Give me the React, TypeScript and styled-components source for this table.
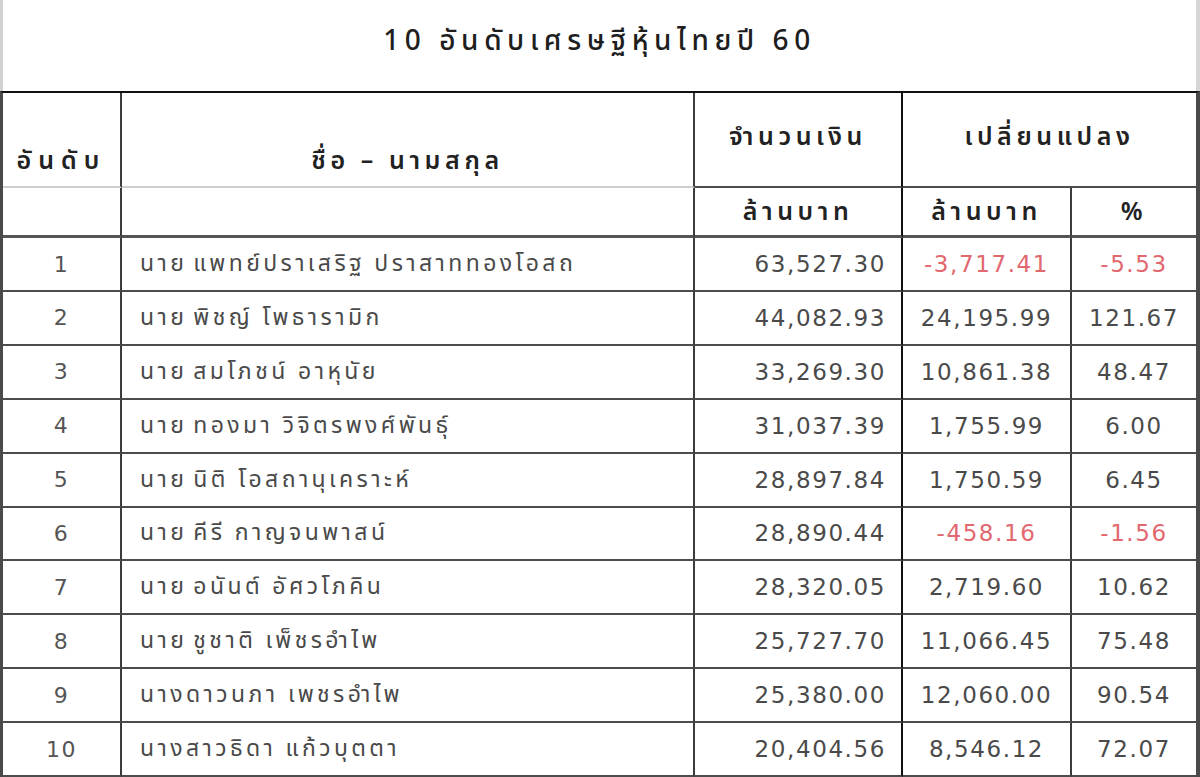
import React from "react";
import styled, { createGlobalStyle } from "styled-components";

const Global = createGlobalStyle`
  html, body { margin: 0; padding: 0; background: #ffffff; }
  body { width: 1200px; height: 777px; overflow: hidden; }
`;

const THAI = `"Noto Sans Thai", "Loma", "Garuda", "Tahoma", "DejaVu Sans", "Noto Sans", sans-serif`;
const NUM = `"DejaVu Sans", "Liberation Sans", sans-serif`;

const Page = styled.div`
  width: 1200px;
  height: 777px;
  display: flex;
  flex-direction: column;
  overflow: hidden;
  background: #fff;
`;

const TitleBar = styled.div`
  height: 93px;
  box-sizing: border-box;
  border-left: 3px solid #d2d2d2;
  border-right: 4px solid #d6d6d6;
  display: flex;
  align-items: center;
  justify-content: center;
  padding-bottom: 8px;
`;

const Title = styled.h1`
  margin: 0;
  font-family: ${THAI};
  font-size: 28px;
  font-weight: 500;
  color: #1e1e1e;
  letter-spacing: 5.6px;
`;

const Grid = styled.div`
  display: grid;
  grid-template-columns: 119px 573px 208px 169px 124px;
  grid-template-rows: 95px 50px repeat(10, 53.9px);
  border-top: 2px solid #111;
  border-left: 3px solid #4a4a4a;
  border-right: 4px solid #4a4a4a;
`;

const Cell = styled.div<{
  $align?: "left" | "center" | "right";
  $v?: "center" | "end";
  $span?: number;
  $noRight?: boolean;
  $bottom?: string;
  $rightColor?: string;
}>`
  box-sizing: border-box;
  display: flex;
  align-items: ${(p) => (p.$v === "end" ? "flex-end" : "center")};
  justify-content: ${(p) =>
    p.$align === "left" ? "flex-start" : p.$align === "right" ? "flex-end" : "center"};
  grid-column: span ${(p) => p.$span ?? 1};
  border-right: ${(p) => (p.$noRight ? "none" : `2px solid ${p.$rightColor ?? "#3c3c3c"}`)};
  border-bottom: ${(p) => p.$bottom ?? "2px solid #4d4d4d"};
  overflow: hidden;
  white-space: nowrap;
`;

const HeadText = styled.span<{ $pb?: number; $ls?: number }>`
  font-family: ${THAI};
  font-size: 25px;
  font-weight: 600;
  color: #222;
  letter-spacing: ${(p) => p.$ls ?? 4.6}px;
  padding-bottom: ${(p) => p.$pb ?? 0}px;
`;

const RankText = styled.span`
  font-family: ${NUM};
  font-size: 22px;
  color: #555;
  letter-spacing: 1.5px;
`;

const NameText = styled.span`
  font-family: ${THAI};
  font-size: 23px;
  color: #4a4a4a;
  letter-spacing: 3.4px;
  padding-left: 18px;
`;

const Prefix = styled.span`
  margin-right: 6px;
`;

const NumText = styled.span<{ $neg?: boolean; $pr?: number }>`
  font-family: ${NUM};
  font-size: 23px;
  color: ${(p) => (p.$neg ? "#e26870" : "#4a4a4a")};
  letter-spacing: 1.6px;
  padding-right: ${(p) => p.$pr ?? 0}px;
`;

type Row = {
  rank: number;
  prefix: string;
  name: string;
  amount: string;
  change: string;
  pct: string;
};

const rows: Row[] = [
  { rank: 1, prefix: "นาย", name: "แพทย์ปราเสริฐ ปราสาททองโอสถ", amount: "63,527.30", change: "-3,717.41", pct: "-5.53" },
  { rank: 2, prefix: "นาย", name: "พิชญ์ โพธารามิก", amount: "44,082.93", change: "24,195.99", pct: "121.67" },
  { rank: 3, prefix: "นาย", name: "สมโภชน์ อาหุนัย", amount: "33,269.30", change: "10,861.38", pct: "48.47" },
  { rank: 4, prefix: "นาย", name: "ทองมา วิจิตรพงศ์พันธุ์", amount: "31,037.39", change: "1,755.99", pct: "6.00" },
  { rank: 5, prefix: "นาย", name: "นิติ โอสถานุเคราะห์", amount: "28,897.84", change: "1,750.59", pct: "6.45" },
  { rank: 6, prefix: "นาย", name: "คีรี กาญจนพาสน์", amount: "28,890.44", change: "-458.16", pct: "-1.56" },
  { rank: 7, prefix: "นาย", name: "อนันต์ อัศวโภคิน", amount: "28,320.05", change: "2,719.60", pct: "10.62" },
  { rank: 8, prefix: "นาย", name: "ชูชาติ เพ็ชรอำไพ", amount: "25,727.70", change: "11,066.45", pct: "75.48" },
  { rank: 9, prefix: "", name: "นางดาวนภา เพชรอำไพ", amount: "25,380.00", change: "12,060.00", pct: "90.54" },
  { rank: 10, prefix: "", name: "นางสาวธิดา แก้วบุตตา", amount: "20,404.56", change: "8,546.12", pct: "72.07" },
];

export default function App() {
  return (
    <Page>
      <Global />
      <TitleBar>
        <Title>10 อันดับเศรษฐีหุ้นไทยปี 60</Title>
      </TitleBar>
      <Grid>
        <Cell $v="end" $bottom="2px solid #cfcfcf">
          <HeadText $pb={6} $ls={7}>อันดับ</HeadText>
        </Cell>
        <Cell $v="end" $bottom="2px solid #cfcfcf">
          <HeadText $pb={6}>ชื่อ – นามสกุล</HeadText>
        </Cell>
        <Cell $rightColor="#111">
          <HeadText $pb={6}>จำนวนเงิน</HeadText>
        </Cell>
        <Cell $span={2} $noRight>
          <HeadText $pb={6}>เปลี่ยนแปลง</HeadText>
        </Cell>

        <Cell $bottom="3px solid #555" />
        <Cell $bottom="3px solid #555" />
        <Cell $bottom="3px solid #555" $rightColor="#111">
          <HeadText>ล้านบาท</HeadText>
        </Cell>
        <Cell $bottom="3px solid #555">
          <HeadText>ล้านบาท</HeadText>
        </Cell>
        <Cell $bottom="3px solid #555" $noRight>
          <HeadText>%</HeadText>
        </Cell>

        {rows.map((r) => (
          <React.Fragment key={r.rank}>
            <Cell>
              <RankText>{r.rank}</RankText>
            </Cell>
            <Cell $align="left">
              <NameText>
                {r.prefix && <Prefix>{r.prefix}</Prefix>}
                {r.name}
              </NameText>
            </Cell>
            <Cell $align="right" $rightColor="#111">
              <NumText $pr={15}>{r.amount}</NumText>
            </Cell>
            <Cell>
              <NumText $neg={r.change.startsWith("-")}>{r.change}</NumText>
            </Cell>
            <Cell $noRight>
              <NumText $neg={r.pct.startsWith("-")}>{r.pct}</NumText>
            </Cell>
          </React.Fragment>
        ))}
      </Grid>
    </Page>
  );
}
